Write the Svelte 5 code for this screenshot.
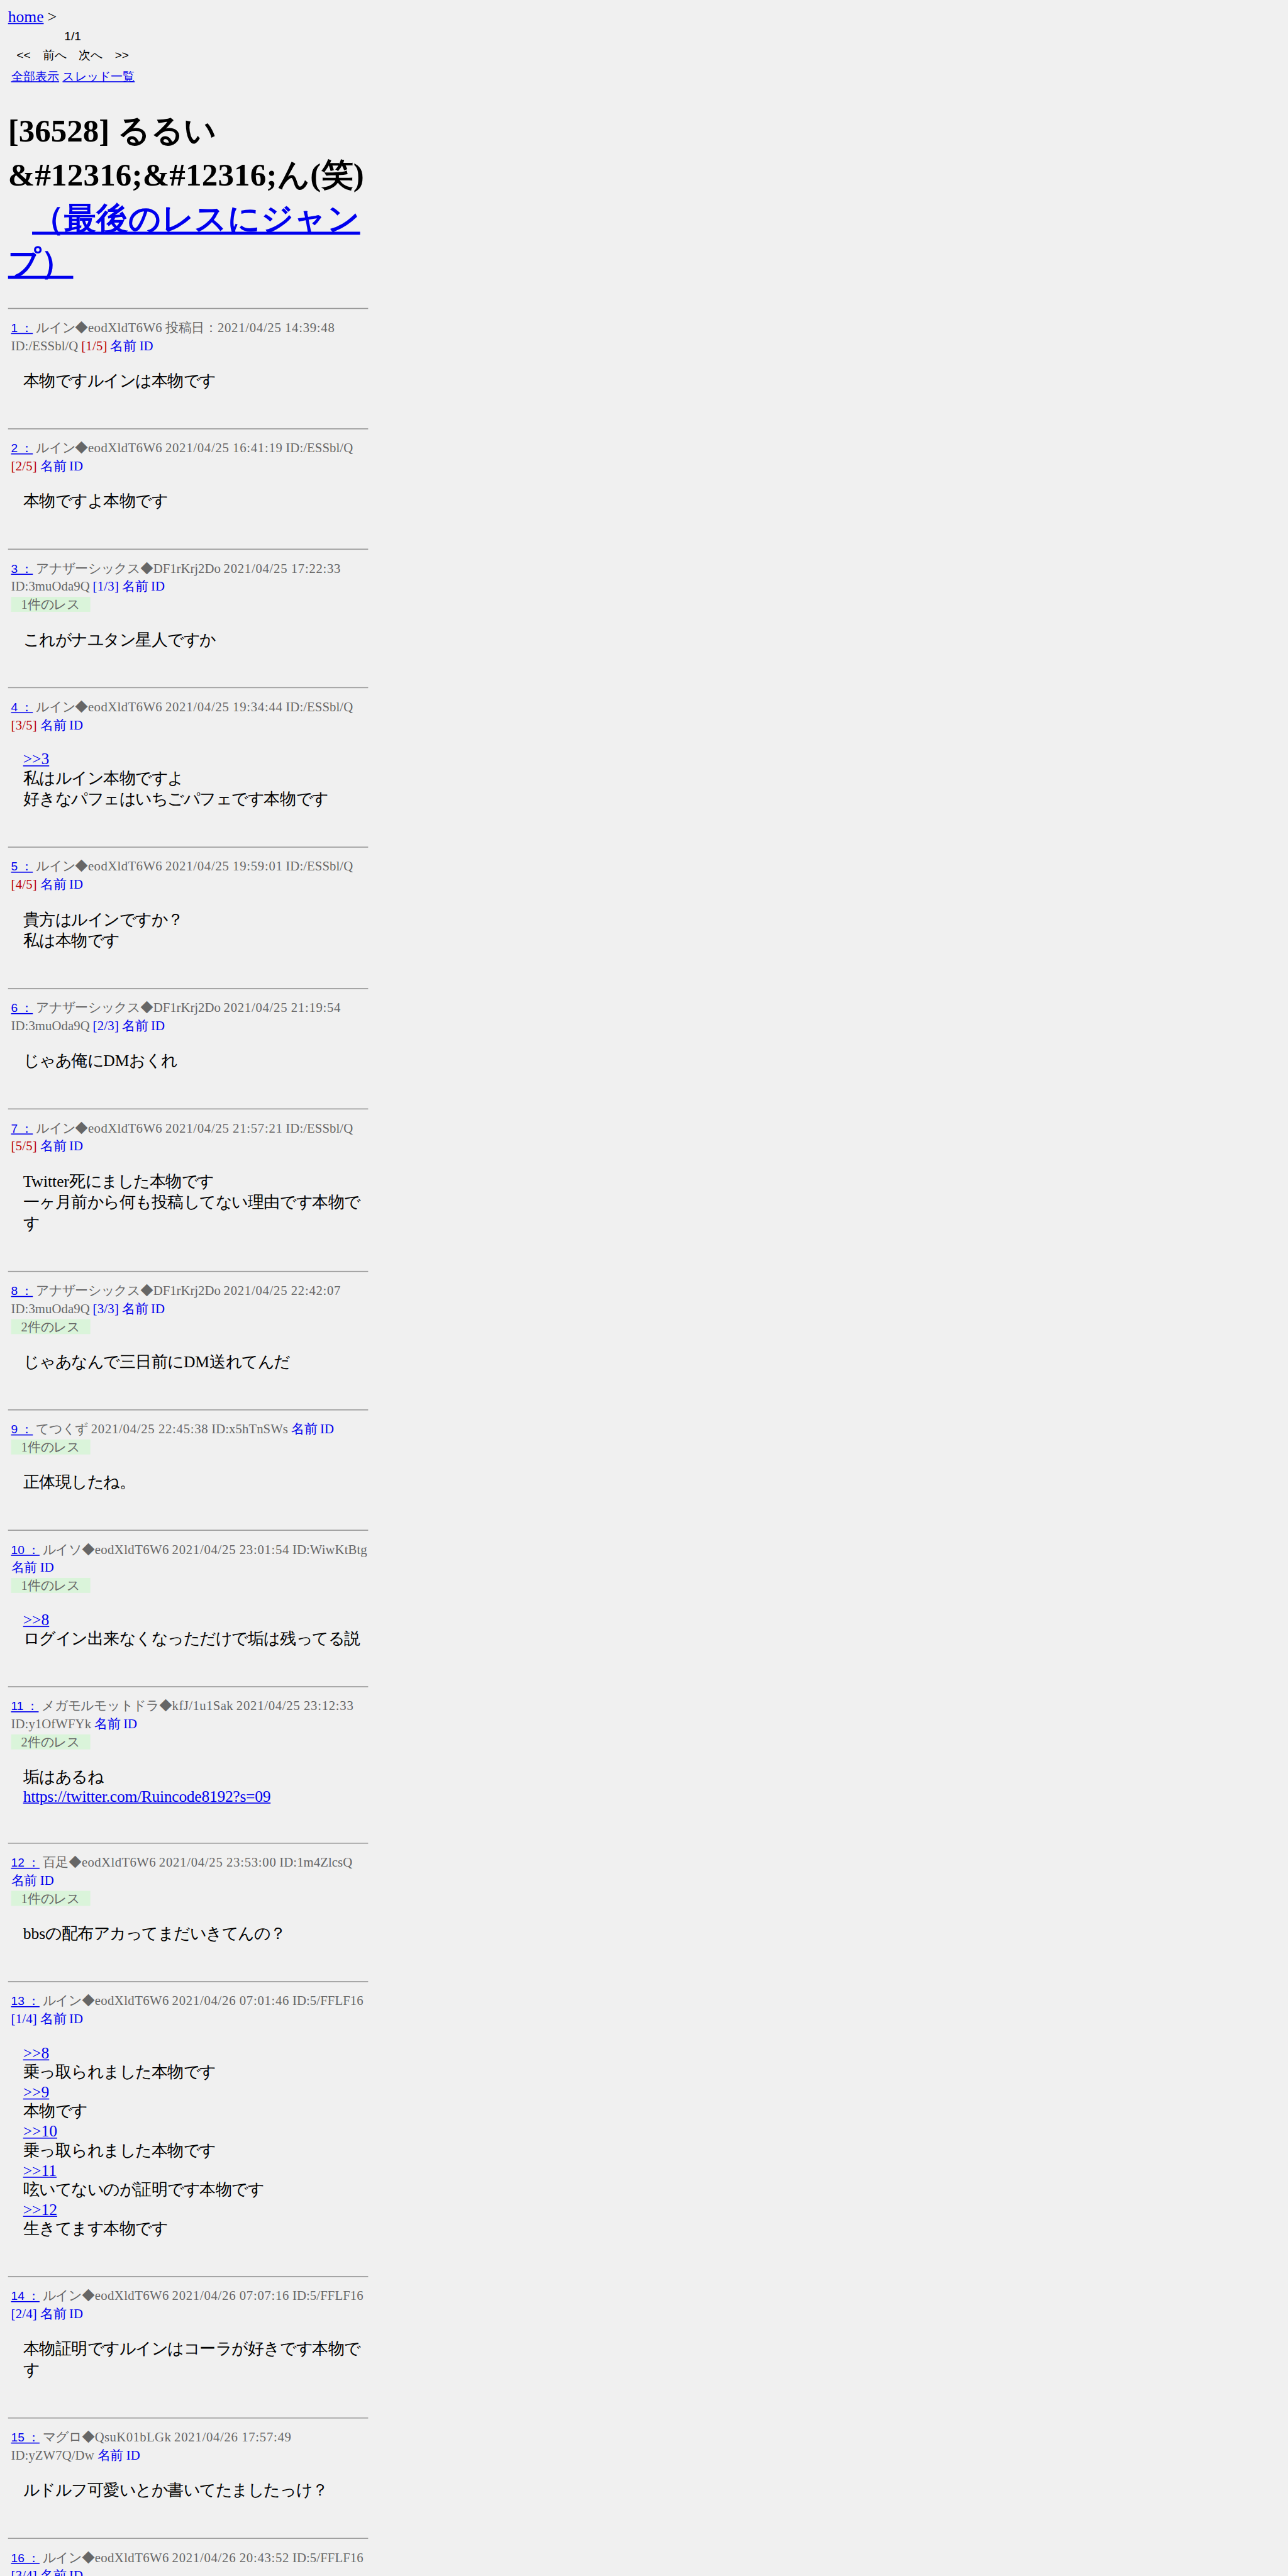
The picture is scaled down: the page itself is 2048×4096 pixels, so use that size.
<script>
    const RUIN = ['ルイン', 'eodXldT6W6'];
    const ANOTHER = ['アナザーシックス', 'DF1rKrj2Do'];

    const posts = [
        { no: 1, name: RUIN, label: '投稿日：', date: '2021/04/25 14:39:48', id: '/ESSbl/Q', count: '1/5', many: true, lines: ['本物ですルインは本物です'] },
        { no: 2, name: RUIN, date: '2021/04/25 16:41:19', id: '/ESSbl/Q', count: '2/5', many: true, lines: ['本物ですよ本物です'] },
        { no: 3, name: ANOTHER, date: '2021/04/25 17:22:33', id: '3muOda9Q', count: '1/3', replies: 1, lines: ['これがナユタン星人ですか'] },
        { no: 4, name: RUIN, date: '2021/04/25 19:34:44', id: '/ESSbl/Q', count: '3/5', many: true, lines: ['>>3', '私はルイン本物ですよ', '好きなパフェはいちごパフェです本物です'] },
        { no: 5, name: RUIN, date: '2021/04/25 19:59:01', id: '/ESSbl/Q', count: '4/5', many: true, lines: ['貴方はルインですか？', '私は本物です'] },
        { no: 6, name: ANOTHER, date: '2021/04/25 21:19:54', id: '3muOda9Q', count: '2/3', lines: ['じゃあ俺にDMおくれ'] },
        { no: 7, name: RUIN, date: '2021/04/25 21:57:21', id: '/ESSbl/Q', count: '5/5', many: true, lines: ['Twitter死にました本物です', '一ヶ月前から何も投稿してない理由です本物です'] },
        { no: 8, name: ANOTHER, date: '2021/04/25 22:42:07', id: '3muOda9Q', count: '3/3', replies: 2, lines: ['じゃあなんで三日前にDM送れてんだ'] },
        { no: 9, name: ['てつくず'], date: '2021/04/25 22:45:38', id: 'x5hTnSWs', replies: 1, lines: ['正体現したね。'] },
        { no: 10, name: ['ルイソ', 'eodXldT6W6'], date: '2021/04/25 23:01:54', id: 'WiwKtBtg', replies: 1, lines: ['>>8', 'ログイン出来なくなっただけで垢は残ってる説'] },
        { no: 11, name: ['メガモルモットドラ', 'kfJ/1u1Sak'], date: '2021/04/25 23:12:33', id: 'y1OfWFYk', replies: 2, lines: ['垢はあるね', 'https://twitter.com/Ruincode8192?s=09'] },
        { no: 12, name: ['百足', 'eodXldT6W6'], date: '2021/04/25 23:53:00', id: '1m4ZlcsQ', replies: 1, lines: ['bbsの配布アカってまだいきてんの？'] },
        { no: 13, name: RUIN, date: '2021/04/26 07:01:46', id: '5/FFLF16', count: '1/4', lines: ['>>8', '乗っ取られました本物です', '>>9', '本物です', '>>10', '乗っ取られました本物です', '>>11', '呟いてないのが証明です本物です', '>>12', '生きてます本物です'] },
        { no: 14, name: RUIN, date: '2021/04/26 07:07:16', id: '5/FFLF16', count: '2/4', lines: ['本物証明ですルインはコーラが好きです本物です'] },
        { no: 15, name: ['マグロ', 'QsuK01bLGk'], date: '2021/04/26 17:57:49', id: 'yZW7Q/Dw', lines: ['ルドルフ可愛いとか書いてたましたっけ？'] },
        { no: 16, name: RUIN, date: '2021/04/26 20:43:52', id: '5/FFLF16', count: '3/4', lines: [] }
    ];

    function isLink(line) {
        return line.startsWith('>>') || line.startsWith('http');
    }
</script>

<div class="viewport">
    <div class="page" lang="ja">
        <div class="breadcrumb"><a href="#home">home</a> &gt;</div>
        <div class="pager">
            <div class="current">1/1</div>
            <div class="steps">&lt;&lt;　前へ　次へ　&gt;&gt;</div>
            <div class="lists"><a href="#all">全部表示</a> <a href="#threads">スレッド一覧</a></div>
        </div>
        <h1>[36528] るるい<span class="entities">&amp;#12316;&amp;#12316;ん(笑)</span><br>&nbsp;&nbsp;&nbsp;<a href="#last">（最後のレスにジャンプ）</a></h1>

        {#each posts as post (post.no)}
            <hr>
            <div class="meta">
                <a class="number" href="#p{post.no}">{post.no} ：</a>
                {post.name[0]}{#if post.name[1]}◆<span class="trip" class:tight={post.name === ANOTHER}>{post.name[1]}</span>{/if}
                {post.label ?? ''}<span class="date">{post.date}</span>
                <span class="id">ID:{post.id}</span>
                {#if post.count}
                    <span class="count" class:many={post.many}>[{post.count}]</span>
                {/if}
                <span class="extract">名前</span> <span class="extract">ID</span>
                {#if post.replies}
                    <div><span class="replies">{post.replies}件のレス</span></div>
                {/if}
            </div>
            <div class="message">
                {#each post.lines as line}
                    {#if isLink(line)}
                        <div class="latin"><a class:url={line.startsWith('http')} href="#ref">{line}</a></div>
                    {:else}
                        <div>{line}</div>
                    {/if}
                {/each}
            </div>
        {/each}
    </div>
</div>

<style>
    :global(body) {
        margin: 0;
        background: #f0f0f0;
    }
    .viewport {
        width: 2048px;
        height: 4096px;
        overflow: hidden;
        background: #f0f0f0;
    }
    .page {
        box-sizing: border-box;
        width: 375px;
        padding: 8px;
        color: #000;
        font: 16px/18px "Liberation Serif", serif;
        transform: scale(1.595);
        transform-origin: 0 0;
    }
    a {
        color: #00e;
    }
    .pager {
        width: 123px;
        margin-left: 3px;
        font: 12px/18px "Liberation Sans", sans-serif;
        text-align: center;
        white-space: nowrap;
    }
    .current {
        line-height: 20px;
    }
    .lists {
        line-height: 25px;
    }
    h1 {
        margin: 19px 0 23px;
        font-size: 32px;
        line-height: 44px;
    }
    .entities {
        letter-spacing: .1px;
    }
    hr {
        height: 1px;
        margin: 0;
        border: 0;
        background: #999;
    }
    .meta {
        margin: 10px 0 15px;
        padding-left: 3px;
        color: #666;
        font-size: 13px;
        line-height: 18px;
        word-spacing: -.25px;
    }
    .number {
        font-family: "Liberation Sans", sans-serif;
        font-size: 12px;
    }
    .trip {
        letter-spacing: .26px;
    }
    .tight {
        letter-spacing: 0;
    }
    .date {
        letter-spacing: .45px;
    }
    .id {
        letter-spacing: .05px;
    }
    .count,
    .extract {
        color: #00e;
        white-space: nowrap;
    }
    .count {
        letter-spacing: .14px;
    }
    .many {
        color: #b00;
    }
    .replies {
        padding: 0 10px;
        background: #daf4da;
    }
    .message {
        padding: 0 0 37px 15px;
        line-height: 21px;
    }
    .latin {
        margin-bottom: -2px;
        line-height: 20px;
    }
    .latin:last-child {
        margin-bottom: 0;
        line-height: 18px;
    }
    .url {
        letter-spacing: -.17px;
    }
</style>
